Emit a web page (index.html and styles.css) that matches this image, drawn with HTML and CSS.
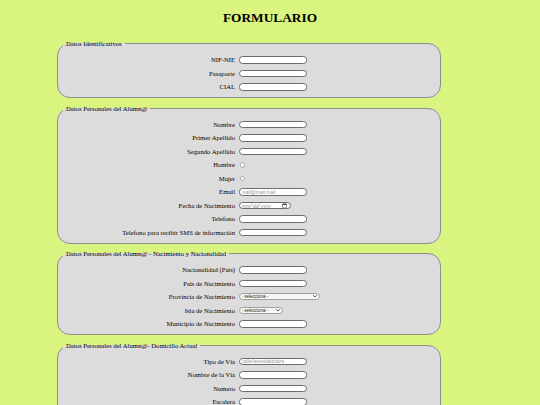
FILE: index.html
```html
<!DOCTYPE html>
<html lang="es">
<head>
<meta charset="utf-8">
<title>Formulario</title>
<link rel="stylesheet" href="styles.css">
</head>
<body>
<div class="page">
  <h1 class="title">FORMULARIO</h1>
  <form class="form">
    <fieldset class="group">
      <legend class="group-title">Datos Identificativos</legend>
      <div class="row"><label class="lbl" for="nif">NIF-NIE</label><input class="field" type="text" id="nif"></div>
      <div class="row"><label class="lbl" for="pas">Pasaporte</label><input class="field" type="text" id="pas"></div>
      <div class="row"><label class="lbl" for="cial">CIAL</label><input class="field" type="text" id="cial"></div>
    </fieldset>

    <fieldset class="group">
      <legend class="group-title">Datos Personales del Alumn@</legend>
      <div class="row"><label class="lbl" for="nom">Nombre</label><input class="field" type="text" id="nom"></div>
      <div class="row"><label class="lbl" for="ap1">Primer Apellido</label><input class="field" type="text" id="ap1"></div>
      <div class="row"><label class="lbl" for="ap2">Segundo Apellido</label><input class="field" type="text" id="ap2"></div>
      <div class="row"><label class="lbl" for="hom">Hombre</label><input class="radio" type="radio" name="sexo" id="hom"></div>
      <div class="row"><label class="lbl" for="muj">Mujer</label><input class="radio" type="radio" name="sexo" id="muj"></div>
      <div class="row"><label class="lbl" for="mail">Email</label><input class="field" type="email" id="mail" placeholder="mail@mail.mail"></div>
      <div class="row"><label class="lbl" for="fec">Fecha de Nacimiento</label><input class="field date" type="date" id="fec"></div>
      <div class="row"><label class="lbl" for="tel">Telefono</label><input class="field" type="tel" id="tel"></div>
      <div class="row"><label class="lbl" for="sms">Telefono para recibir SMS de información</label><input class="field" type="tel" id="sms"></div>
    </fieldset>

    <fieldset class="group">
      <legend class="group-title">Datos Personales del Alumn@ - Nacimiento y Nacionalidad</legend>
      <div class="row"><label class="lbl" for="nac">Nacionalidad (País)</label><input class="field" type="text" id="nac"></div>
      <div class="row"><label class="lbl" for="pais">País de Nacimiento</label><input class="field" type="text" id="pais"></div>
      <div class="row"><label class="lbl" for="prov">Provincia de Nacimiento</label>
        <span class="select-wrap wide">
          <select class="choice" id="prov"><option>- selecciona -</option><option>Las Palmas</option><option>Santa Cruz de Tenerife</option></select>
          <svg class="chevron" viewBox="0 0 10 6" aria-hidden="true"><path d="M1.2 1.2 L5 4.8 L8.8 1.2" fill="none" stroke="#222" stroke-width="1.8" stroke-linecap="round" stroke-linejoin="round"/></svg>
        </span></div>
      <div class="row"><label class="lbl" for="isla">Isla de Nacimiento</label>
        <span class="select-wrap">
          <select class="choice" id="isla"><option>- selecciona -</option><option>Gran Canaria</option><option>Tenerife</option></select>
          <svg class="chevron" viewBox="0 0 10 6" aria-hidden="true"><path d="M1.2 1.2 L5 4.8 L8.8 1.2" fill="none" stroke="#222" stroke-width="1.8" stroke-linecap="round" stroke-linejoin="round"/></svg>
        </span></div>
      <div class="row"><label class="lbl" for="mun">Municipio de Nacimiento</label><input class="field" type="text" id="mun"></div>
    </fieldset>

    <fieldset class="group">
      <legend class="group-title">Datos Personales del Alumn@- Domicilio Actual</legend>
      <div class="row"><label class="lbl" for="tipo">Tipo de Vía</label><input class="field" type="text" id="tipo" placeholder="calle/avenida/plaza"></div>
      <div class="row"><label class="lbl" for="via">Nombre de la Vía</label><input class="field" type="text" id="via"></div>
      <div class="row"><label class="lbl" for="num">Numero</label><input class="field" type="text" id="num"></div>
      <div class="row"><label class="lbl" for="esc">Escalera</label><input class="field" type="text" id="esc"></div>
      <div class="row"><label class="lbl" for="piso">Piso</label><input class="field" type="text" id="piso"></div>
      <div class="row"><label class="lbl" for="pta">Puerta</label><input class="field" type="text" id="pta"></div>
    </fieldset>
  </form>
</div>
</body>
</html>
```

FILE: styles.css
```css
html, body {
  margin: 0;
  padding: 0;
}

body {
  background: #daf57f;
  font-family: "Liberation Serif", "Times New Roman", serif;
  color: #000;
}

.page {
  zoom: 0.5;
  width: 1080px;
  padding-top: 1px;
}

.title {
  font-size: 26.67px;
  font-weight: bold;
  text-align: center;
  margin: 18px 0 29px;
  line-height: normal;
}

.form {
  margin: 0;
}

.group {
  box-sizing: border-box;
  width: 768px;
  margin: 0 0 13px 114px;
  padding: 12px 10px 7px;
  border: 2px solid #8e8e8e;
  border-radius: 26px;
  background: #dcdcdc;
  min-inline-size: 0;
}

.group-title {
  font-size: 13.33px;
  padding: 0 6px;
  line-height: normal;
}

.row {
  display: grid;
  grid-template-columns: 344px 1fr;
  column-gap: 7px;
  align-items: center;
  justify-items: start;
  height: 27px;
}

.lbl {
  justify-self: end;
  font-size: 13.33px;
  text-align: right;
  white-space: nowrap;
}

.field {
  box-sizing: border-box;
  width: 136px;
  height: 15px;
  margin: 0;
  padding: 0 4px;
  border: 2px solid #6c6c6c;
  border-radius: 7px;
  background: #fff;
  font-family: "Liberation Sans", Arial, sans-serif;
  font-size: 10px;
  color: #333;
  outline: none;
}

.field::placeholder {
  color: #9a9a9a;
}

.date {
  width: 104px;
  color: #8a8a8a;
}

.radio {
  appearance: none;
  box-sizing: border-box;
  width: 11px;
  height: 11px;
  margin: 0 0 0 2px;
  border: 1.5px solid #a9a9a9;
  border-radius: 50%;
  background: #fff;
}

.select-wrap {
  position: relative;
  display: block;
  width: 88px;
  height: 14px;
}

.select-wrap.wide {
  width: 162px;
}

.choice {
  appearance: none;
  box-sizing: border-box;
  display: block;
  width: 100%;
  height: 100%;
  margin: 0;
  padding: 0 14px 0 4px;
  border: 1px solid #a0a0a0;
  border-radius: 7px;
  background: #f6f6f6;
  font-family: "Liberation Sans", Arial, sans-serif;
  font-size: 9px;
  line-height: 12px;
  color: #222;
}

.chevron {
  position: absolute;
  right: 5px;
  top: 4px;
  width: 8px;
  height: 5px;
  pointer-events: none;
}
```
